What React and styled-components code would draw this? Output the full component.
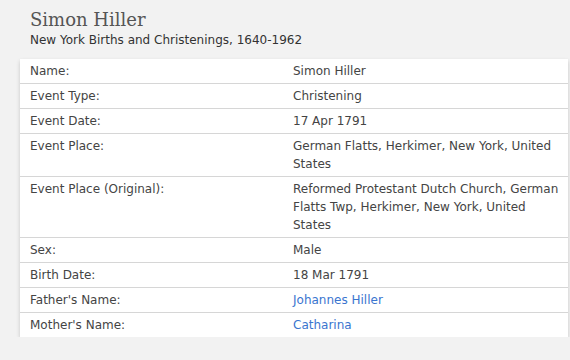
import React from 'react'
import styled, { createGlobalStyle } from 'styled-components'

const Global = createGlobalStyle`
  html, body {
    margin: 0;
    padding: 0;
    background: #f2f2f2;
  }
  body {
    font-family: "DejaVu Sans", Verdana, sans-serif;
    color: #333;
  }
`

const Page = styled.div`
  padding: 9px 2px 0 20px;
`

const Header = styled.div`
  padding-left: 10px;
  margin-bottom: 10px;
`

const Title = styled.h1`
  margin: 0;
  font-family: "DejaVu Serif", "Liberation Serif", serif;
  font-weight: normal;
  font-size: 18px;
  line-height: 22px;
  color: #555;
`

const Subtitle = styled.div`
  font-size: 12px;
  line-height: 18px;
  color: #333;
`

const Card = styled.div`
  background: #fff;
  box-shadow: 0 2px 4px rgba(0, 0, 0, 0.18);
`

const Row = styled.div`
  display: grid;
  grid-template-columns: 263px 1fr;
  border-top: 1px solid #d6d6d6;
  &:first-child {
    border-top: none;
  }
`

const Cell = styled.div`
  padding: 3px 2px 3px 10px;
  font-size: 12px;
  line-height: 18px;
  color: ${p => (p.$link ? '#3a75cf' : '#444')};
`

const rows = [
  ['Name:', 'Simon Hiller'],
  ['Event Type:', 'Christening'],
  ['Event Date:', '17 Apr 1791'],
  ['Event Place:', 'German Flatts, Herkimer, New York, United States'],
  ['Event Place (Original):', 'Reformed Protestant Dutch Church, German Flatts Twp, Herkimer, New York, United States'],
  ['Sex:', 'Male'],
  ['Birth Date:', '18 Mar 1791'],
  ["Father's Name:", 'Johannes Hiller', true],
  ["Mother's Name:", 'Catharina', true],
]

export default function App() {
  return (
    <Page>
      <Global />
      <Header>
        <Title>Simon Hiller</Title>
        <Subtitle>New York Births and Christenings, 1640-1962</Subtitle>
      </Header>
      <Card>
        {rows.map(([label, value, link]) => (
          <Row key={label}>
            <Cell>{label}</Cell>
            <Cell $link={link}>{value}</Cell>
          </Row>
        ))}
      </Card>
    </Page>
  )
}
